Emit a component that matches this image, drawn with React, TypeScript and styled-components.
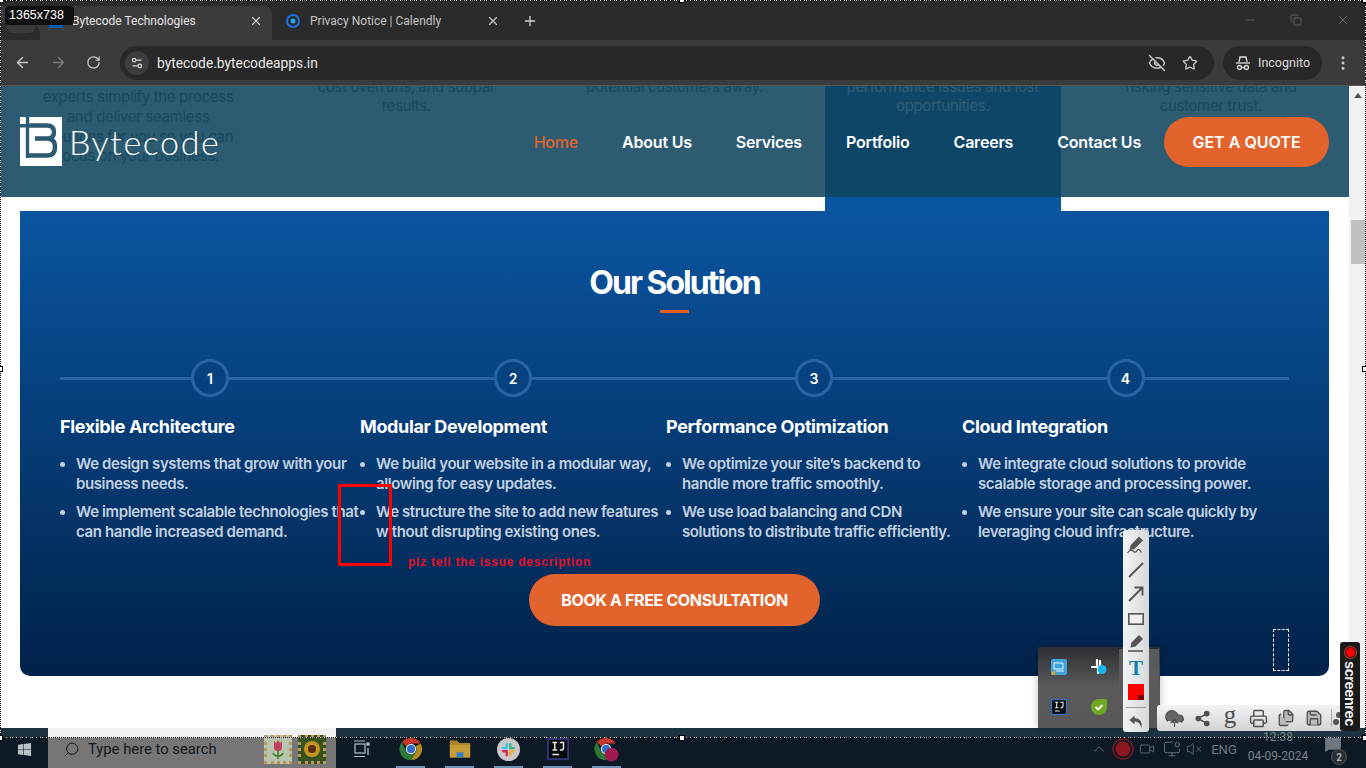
import React from 'react';
import styled, { createGlobalStyle } from 'styled-components';
import {
  ArrowLeft, ArrowRight, RotateCw, X, Plus, Minus, Copy, Star, EyeOff, MoreVertical, Settings2,
  ChevronUp, Video, MonitorDot, VolumeX, MessageSquare, Share2, Printer, Files, Save, Search, CloudUpload,
} from 'lucide-react';
import { FaWindows } from 'react-icons/fa';

const GlobalStyle = createGlobalStyle`
  html, body { margin: 0; padding: 0; background: #fff; overflow: hidden; }
  * { box-sizing: border-box; }
  body { font-family: Inter, "Liberation Sans", sans-serif; }
`

const Screen = styled.div`
  position: relative;
  width: 1366px;
  height: 768px;
  overflow: hidden;
  display: grid;
  grid-template-rows: 40px 46px 642px 40px;
  grid-template-columns: 1366px;
`

/* browser chrome */
const TabStrip = styled.div`
  background: #2b2b2b;
  display: flex;
  align-items: flex-end;
  padding-right: 15px;
  font-family: Roboto, sans-serif;
`
const TabSearch = styled.div`
  width: 40px;
  height: 34px;
  background: #3b3b3b;
  display: flex;
  align-items: flex-end;
`
const TabSearchInner = styled.div`
  width: 40px;
  height: 17px;
  background: #2b2b2b;
  border-radius: 0 10px 0 0;
  padding: 0 5px 7px 7px;
  display: flex;
  &::after {
    content: "";
    flex: 1;
    background: #3b3b3b;
    border-radius: 0 0 6px 6px;
  }
`
const Tab = styled.div<{ $active?: boolean }>`
  width: ${p => (p.$active ? '232px' : '240px')};
  height: 34px;
  padding: 0 ${p => (p.$active ? '9px' : '12px')} 5px ${p => (p.$active ? '9px' : '14px')};
  display: flex;
  align-items: center;
  gap: ${p => (p.$active ? '9px' : '10px')};
  font-size: 12px;
  color: ${p => (p.$active ? '#e6e6e6' : '#c4c4c4')};
  background: ${p => (p.$active ? '#3b3b3b' : 'transparent')};
  border-radius: 8px 8px 0 0;
  & span { flex: 1; white-space: nowrap; }
  & svg { flex: none; }
`
const NewTab = styled.div`
  width: 36px;
  height: 34px;
  padding-bottom: 4px;
  display: flex;
  align-items: center;
  justify-content: center;
  color: #d0d0d0;
`
const WindowControls = styled.div`
  margin-left: auto;
  height: 40px;
  display: flex;
  align-items: center;
  gap: 33px;
  color: #8c8c8c;
`
const Toolbar = styled.div`
  background: #3b3b3b;
  display: flex;
  align-items: center;
  padding: 0 0 0 14px;
  border-bottom: 1px solid #555;
  font-family: Roboto, sans-serif;
`
const NavButton = styled.div<{ $dim?: boolean }>`
  flex: none;
  width: 36px;
  height: 18px;
  display: flex;
  align-items: center;
  color: ${p => (p.$dim ? '#7c7c7c' : '#c8c8c8')};
`
const AddressBar = styled.div`
  flex: none;
  margin-left: -2px;
  width: 1094px;
  height: 34px;
  background: #282828;
  border-radius: 17px;
  display: flex;
  align-items: center;
  padding: 0 16px 0 5px;
  gap: 8px;
  font-size: 13.8px;
  color: #e8e8e8;
  & b { font-weight: 400; flex: 1; }
`
const SiteInfo = styled.div`
  width: 24px;
  height: 24px;
  border-radius: 50%;
  background: #3d3d3d;
  display: flex;
  align-items: center;
  justify-content: center;
  color: #d8d8d8;
`
const AddressIcons = styled.div`
  display: flex;
  align-items: center;
  gap: 16px;
  color: #c4c4c4;
`
const IncognitoChip = styled.div`
  flex: none;
  margin-left: 9px;
  width: 99px;
  height: 34px;
  border-radius: 17px;
  background: #282828;
  display: flex;
  align-items: center;
  gap: 7px;
  padding-left: 12px;
  font-size: 12.5px;
  color: #dedede;
`
const MenuDots = styled.div`
  margin-left: 12px;
  color: #c8c8c8;
  display: flex;
`

/* page */
const Page = styled.div`
  display: flex;
  min-height: 0;
  background: #fff;
`
const Viewport = styled.div`
  position: relative;
  flex: 1;
  min-width: 0;
  overflow: hidden;
`
const Scrollbar = styled.div`
  flex: none;
  width: 17px;
  background: #f1f1f1;
  padding-top: 7px;
  display: flex;
  flex-direction: column;
  align-items: center;
`
const ScrollArrow = styled.div`
  width: 0;
  height: 0;
  border-left: 4px solid transparent;
  border-right: 4px solid transparent;
  border-bottom: 5px solid #505050;
`
const ScrollThumb = styled.div`
  margin-top: 122px;
  width: 14px;
  height: 44px;
  background: #c1c1c1;
`
const IssueRow = styled.div`
  height: 125px;
  padding: 0 20px;
  display: grid;
  grid-template-columns: repeat(5, 1fr);
  gap: 32px;
`
const IssueCard = styled.div<{ $highlight?: boolean; $bottom: number }>`
  height: 125px;
  overflow: hidden;
  display: flex;
  flex-direction: column;
  justify-content: flex-end;
  padding-bottom: ${p => p.$bottom}px;
  text-align: center;
  font-size: 15px;
  line-height: 19.7px;
  letter-spacing: -0.33px;
  color: ${p => (p.$highlight ? '#fff' : '#666')};
  background: ${p => (p.$highlight ? '#0a55a0' : 'transparent')};
`
const Header = styled.header`
  position: absolute;
  top: 0;
  left: 0;
  right: 0;
  height: 111px;
  background: rgba(15, 68, 95, 0.88);
  padding: 31px 20px 0 20px;
  display: flex;
  align-items: flex-start;
`
const Logo = styled.div`
  display: flex;
  align-items: flex-start;
  gap: 7px;
  color: #fff;
`
const Wordmark = styled.div`
  font-family: Lato, sans-serif;
  font-weight: 300;
  font-size: 34px;
  line-height: 50px;
  letter-spacing: 1.6px;
`
const Nav = styled.nav`
  margin-left: auto;
  height: 50px;
  display: flex;
  align-items: center;
  gap: 44px;
`
const NavLink = styled.a<{ $active?: boolean }>`
  font-size: 16px;
  font-weight: ${p => (p.$active ? 500 : 600)};
  letter-spacing: -0.2px;
  color: ${p => (p.$active ? '#e2632b' : '#fff')};
`
const QuoteButton = styled.div`
  margin-left: -21px;
  width: 165px;
  height: 50px;
  border-radius: 25px;
  background: #e2632b;
  color: #fff;
  font-size: 16px;
  font-weight: 600;
  display: flex;
  align-items: center;
  justify-content: center;
`
const SolutionPanel = styled.section`
  margin: 0 20px;
  height: 465px;
  border-radius: 0 0 10px 10px;
  background: linear-gradient(180deg, #0a55a0 0%, #01224a 100%);
  padding: 51px 40px 0 40px;
  display: flex;
  flex-direction: column;
  align-items: center;
  color: #fff;
`
const Title = styled.h2`
  margin: 0;
  font-size: 32px;
  line-height: 42px;
  font-weight: 700;
  letter-spacing: -2px;
`
const TitleRule = styled.div`
  margin-top: 6px;
  width: 29px;
  height: 3px;
  background: #e8601f;
`
const Steps = styled.div`
  position: relative;
  margin-top: 46px;
  width: 100%;
  display: grid;
  grid-template-columns: 300px 306px 296px 327px;
  &::before {
    content: "";
    position: absolute;
    top: 18px;
    left: 0;
    right: 0;
    height: 3px;
    background: #2a62a6;
  }
`
const Step = styled.div`
  position: relative;
  display: flex;
  flex-direction: column;
`
const StepNumber = styled.div`
  align-self: center;
  width: 38px;
  height: 38px;
  border-radius: 50%;
  border: 3px solid #2a62a6;
  background: #074280;
  display: flex;
  align-items: center;
  justify-content: center;
  font-size: 14px;
  font-weight: 600;
`
const StepTitle = styled.h3`
  margin: 18px 0 0 0;
  font-size: 18px;
  line-height: 24px;
  font-weight: 700;
  letter-spacing: -0.37px;
  white-space: nowrap;
`
const Points = styled.ul`
  margin: 15px 0 0 0;
  padding: 0;
  list-style: none;
`
const Point = styled.li`
  position: relative;
  padding-left: 16px;
  margin-bottom: 8px;
  font-size: 15px;
  line-height: 20px;
  font-weight: 600;
  letter-spacing: -0.39px;
  color: #c3d0e0;
  &::before {
    content: "";
    position: absolute;
    left: 0;
    top: 8px;
    width: 5px;
    height: 5px;
    border-radius: 50%;
    background: #c3d0e0;
  }
`
const ConsultButton = styled.div`
  margin-top: 24px;
  width: 291px;
  height: 52px;
  border-radius: 26px;
  background: #e2632b;
  color: #fff;
  font-size: 16px;
  font-weight: 700;
  letter-spacing: -0.35px;
  display: flex;
  align-items: center;
  justify-content: center;
`

/* windows taskbar */
const Taskbar = styled.div`
  background: linear-gradient(180deg, #1c3340 9px, #0d1a26 10px), #0d1a26;
  display: flex;
  align-items: center;
  padding-top: 2px;
  font-family: Roboto, sans-serif;
`
const StartButton = styled.div`
  width: 48px;
  display: flex;
  justify-content: center;
  color: #b8c2c8;
`
const SearchBox = styled.div`
  width: 288px;
  height: 40px;
  margin-top: -2px;
  margin-right: 1px;
  padding: 2px 10px 0 15px;
  background: linear-gradient(180deg, #f0f0f0 9px, #767676 10px);
  display: flex;
  align-items: center;
  gap: 8px;
  color: #10181f;
  font-size: 14.8px;
  & span { flex: 1; }
`
const Stamp = styled.div<{ $bg: string }>`
  width: 28px;
  height: 29px;
  margin-left: -2px;
  background: ${p => p.$bg};
  border: 3px dotted #b89a5e;
  display: flex;
  align-items: center;
  justify-content: center;
`
const TaskSlot = styled.div<{ $running?: boolean }>`
  position: relative;
  width: 49px;
  height: 38px;
  display: flex;
  align-items: center;
  justify-content: center;
  &::after {
    content: "";
    display: ${p => (p.$running ? 'block' : 'none')};
    position: absolute;
    left: 10px;
    right: 10px;
    bottom: 0;
    height: 2px;
    background: #6f93b5;
  }
`
const Tray = styled.div`
  margin-left: auto;
  display: flex;
  align-items: center;
  color: #6f7680;
  font-size: 13px;
`
const TrayItem = styled.div<{ $w: number }>`
  width: ${p => p.$w}px;
  display: flex;
  justify-content: center;
`
const ClockBlock = styled.div`
  width: 66px;
  text-align: center;
  font-size: 12px;
  line-height: 19px;
  color: #7b828b;
  white-space: nowrap;
  padding-bottom: 2px;
  margin-top: -2px;
`
const NoticeWrap = styled.div`
  position: relative;
  width: 55px;
  height: 38px;
  padding: 5px 0 0 13px;
  color: #6f7680;
`
const NoticeBadge = styled.div`
  position: absolute;
  left: 20px;
  top: 19px;
  width: 16px;
  height: 16px;
  border-radius: 50%;
  background: #2a2f33;
  border: 1px solid #555;
  color: #aaa;
  font-size: 10px;
  font-weight: 700;
  display: flex;
  align-items: center;
  justify-content: center;
`

/* screen capture tool laid over everything */
const SelectionFrame = styled.div`
  position: absolute;
  top: 0;
  left: 0;
  width: 1366px;
  height: 738px;
  border: 1px dashed #fff;
  outline: 1px dotted #000;
  outline-offset: -1px;
  pointer-events: none;
`
const Handle = styled.div<{ $x: number; $y: number }>`
  position: absolute;
  left: ${p => p.$x}px;
  top: ${p => p.$y}px;
  width: 6px;
  height: 6px;
  background: #fff;
  border: 1px solid #000;
`
const SizeBadge = styled.div`
  position: absolute;
  left: 5px;
  top: 6px;
  width: 69px;
  height: 19px;
  border-radius: 4px;
  background: #101010;
  color: #fff;
  font-family: "Liberation Sans", sans-serif;
  font-size: 12.5px;
  line-height: 19px;
  padding-left: 4px;
`
const MarkerBox = styled.div`
  position: absolute;
  left: 338px;
  top: 484px;
  width: 54px;
  height: 82px;
  border: 3px solid #f00;
`
const MarkerNote = styled.div`
  position: absolute;
  left: 408px;
  top: 554px;
  color: #e8102a;
  font-family: "Liberation Sans", sans-serif;
  font-weight: 700;
  font-size: 12px;
  line-height: 16px;
  letter-spacing: 0.75px;
  white-space: nowrap;
`
const BlankBox = styled.div`
  position: absolute;
  left: 1273px;
  top: 629px;
  width: 16px;
  height: 42px;
  border: 1px dashed #fff;
`
const TrayPopup = styled.div`
  position: absolute;
  left: 1038px;
  top: 647px;
  width: 122px;
  height: 81px;
  background:
    linear-gradient(#555a5c, #5c5c5c) right 1px top 2px / 40px 38px no-repeat,
    linear-gradient(180deg, #2c2f33 0%, #5a5a5a 50%, #585858 100%);
  box-shadow: 0 0 8px rgba(0, 0, 0, 0.25);
  display: grid;
  grid-template-columns: 40px 40px;
  grid-template-rows: 40px 40px;
  align-items: center;
  justify-items: center;
  padding-left: 1px;
`
const ToolColumn = styled.div`
  position: absolute;
  left: 1123px;
  top: 530px;
  width: 26px;
  height: 202px;
  border-radius: 3px;
  background: linear-gradient(90deg, #f2f3f4, #d6d8da);
  display: flex;
  flex-direction: column;
  align-items: center;
  padding-top: 5px;
  gap: 4.5px;
  color: #505050;
`
const ToolSlot = styled.div`
  height: 20px;
  display: flex;
  align-items: center;
  justify-content: center;
`
const ToolDivider = styled.div`
  width: 20px;
  height: 1px;
  background: #999;
`
const TextTool = styled.div`
  font-family: "Liberation Serif", serif;
  font-size: 21px;
  font-weight: 700;
  line-height: 20px;
  color: #0f7fb0;
`
const ColorSwatch = styled.div`
  position: relative;
  width: 16px;
  height: 16px;
  background: #f00;
  &::after {
    content: "";
    position: absolute;
    right: 0;
    bottom: 0;
    width: 6px;
    height: 5px;
    background: #7c0000;
  }
`
const ActionRow = styled.div`
  position: absolute;
  left: 1157px;
  top: 705px;
  width: 190px;
  height: 26px;
  border-radius: 3px;
  background: linear-gradient(180deg, #f2f3f4, #d2d4d6);
  display: flex;
  align-items: center;
  padding-left: 3px;
  color: #505050;
`
const ActionSlot = styled.div`
  width: 28px;
  display: flex;
  justify-content: center;
  & svg { flex: none; }
`
const ActionDivider = styled.div`
  width: 1px;
  height: 18px;
  margin-left: 3px;
  background: #aaa;
`
const GoogleG = styled.div`
  font-family: "Liberation Serif", serif;
  font-size: 25px;
  line-height: 20px;
  padding-bottom: 6px;
  color: #505050;
`
const RecBadge = styled.div`
  position: absolute;
  left: 1340px;
  top: 642px;
  width: 20px;
  height: 89px;
  border-radius: 3px;
  background: #1a1a1a;
  color: #f0f0f0;
  display: flex;
  flex-direction: column;
  align-items: center;
  padding-top: 3px;
  gap: 3px;
  font-family: "Liberation Sans", sans-serif;
  font-size: 14.5px;
  font-weight: 700;
  & span { writing-mode: vertical-rl; line-height: 20px; letter-spacing: -0.4px; }
`
const RecDot = styled.div`
  width: 9px;
  height: 9px;
  flex: none;
  border-radius: 50%;
  background: #f00;
  box-shadow: 0 0 0 1px #1a1a1a, 0 0 0 2px #d33;
  margin: 3px 0 1px;
`

/* little drawings */
const LogoMark = () => (
  <svg width="42" height="49" viewBox="0 0 42 49">
    <rect width="42" height="49" fill="#fff" />
    <g fill="none" stroke="#2c5a72" strokeWidth="4.4">
      <path d="M0 8.8h7.5M7.5 0v41" strokeWidth="3.4" />
      <path d="M7.5 8.5H27q7 0 7 6.5t-7 6.5H15M27 21.5q8 0 8 8.5t-8 8.5H7.5" />
    </g>
  </svg>
)
const SiteFavicon = () => (
  <svg width="14" height="14" viewBox="0 0 14 14">
    <rect width="14" height="14" fill="#fff" />
    <rect y="11" width="14" height="3" fill="#0b5bb0" />
  </svg>
)
const CalendlyIcon = () => (
  <svg width="14" height="14" viewBox="0 0 14 14">
    <circle cx="7" cy="7" r="6" fill="none" stroke="#1a73e8" strokeWidth="2" />
    <circle cx="7" cy="7" r="2.5" fill="#2aa8e8" />
  </svg>
)
const IncognitoIcon = () => (
  <svg width="16" height="16" viewBox="0 0 16 16" fill="none" stroke="currentColor" strokeWidth="1.3">
    <path d="M4 7l1-5h6l1 5" />
    <path d="M1 8h14" />
    <circle cx="4.5" cy="12.5" r="2" />
    <circle cx="11.5" cy="12.5" r="2" />
    <path d="M6.5 12.5h3" />
  </svg>
)
const ChromeIcon = () => (
  <svg width="24" height="24" viewBox="0 0 26 26">
    <path d="M13 1a12 12 0 0 1 10.4 6H13a6 6 0 0 0-5.2 3L3.2 5.5A12 12 0 0 1 13 1z" fill="#c9352b" />
    <path d="M23.4 7A12 12 0 0 1 13 25l5.2-9a6 6 0 0 0 0-6z" fill="#b58a1c" />
    <path d="M3.2 5.5A12 12 0 0 0 13 25l5.2-9a6 6 0 0 1-10.4 0z" fill="#2b7a38" />
    <circle cx="13" cy="13" r="5" fill="#2f6fc8" stroke="#d8d8d8" strokeWidth="1.4" />
  </svg>
)
const FolderIcon = () => (
  <svg width="22" height="22" viewBox="0 0 26 24">
    <path d="M1 2h9l2 3h13v17H1z" fill="#a9842a" />
    <path d="M1 7h24v15H1z" fill="#c59c38" />
    <path d="M9 22v-6h8v6z" fill="#2d7fc1" />
  </svg>
)
const SlackIcon = () => (
  <svg width="23" height="23" viewBox="0 0 26 26">
    <circle cx="13" cy="13" r="13" fill="#c8c8c8" />
    <path d="M11 7v4.5H7" stroke="#36c5f0" strokeWidth="2.6" fill="none" strokeLinecap="round" strokeLinejoin="round" />
    <path d="M15 7v4.5H19" stroke="#2eb67d" strokeWidth="2.6" fill="none" strokeLinecap="round" strokeLinejoin="round" />
    <path d="M19 15h-4v4.5" stroke="#ecb22e" strokeWidth="2.6" fill="none" strokeLinecap="round" strokeLinejoin="round" />
    <path d="M7 15h4v4.5" stroke="#e01e5a" strokeWidth="2.6" fill="none" strokeLinecap="round" strokeLinejoin="round" />
  </svg>
)
const IdeaIcon = ({ size, border }: { size: number; border: string }) => (
  <svg width={size} height={size} viewBox="0 0 24 24">
    <rect x="1" y="1" width="22" height="22" fill="#08090c" stroke={border} strokeWidth="1.6" />
    <path d="M6 5h5M8.5 5v8M6 13h5M14 5h4v6q0 2-2 2h-2M6 18h7" stroke="#f0f0f0" strokeWidth="1.6" fill="none" />
  </svg>
)
const TaskViewIcon = () => (
  <svg width="16" height="18" viewBox="0 0 16 18" fill="none" stroke="#b8c0c6" strokeWidth="1.2">
    <rect x="1" y="4" width="10" height="9" />
    <path d="M0 1h11M0 16.5h11" />
    <rect x="13" y="3" width="2" height="2" fill="#b8c0c6" />
    <path d="M14 8v7" />
  </svg>
)
const ChromeProfile = () => (
  <svg width="25" height="25" viewBox="0 0 27 27">
    <path d="M13 1a12 12 0 0 1 10.4 6H13a6 6 0 0 0-5.2 3L3.2 5.5A12 12 0 0 1 13 1z" fill="#c9352b" />
    <path d="M3.2 5.5A12 12 0 0 0 13 25l5.2-9a6 6 0 0 1-10.4 0z" fill="#2b7a38" />
    <circle cx="13" cy="13" r="5" fill="#2f6fc8" stroke="#d8d8d8" strokeWidth="1.4" />
    <circle cx="19" cy="19" r="7.5" fill="#a01850" />
  </svg>
)
const TulipStamp = () => (
  <svg width="14" height="20" viewBox="0 0 14 20">
    <path d="M3 2l2 2 2-3 2 3 2-2v7q0 3-4 3t-4-3z" fill="#c04060" />
    <path d="M7 12v8M7 17q-4 0-5-3M7 17q4 0 5-3" stroke="#3c7a2e" strokeWidth="1.5" fill="none" />
  </svg>
)
const SunflowerStamp = () => (
  <svg width="18" height="18" viewBox="0 0 18 18">
    <circle cx="9" cy="9" r="8" fill="#c09520" />
    <circle cx="9" cy="9" r="4" fill="#5b2c0e" />
  </svg>
)
const LeafCheck = () => (
  <svg width="16" height="16" viewBox="0 0 16 16">
    <path d="M8 0h8v8a8 8 0 0 1-16 0 8 8 0 0 1 8-8z" fill="#6fa81e" />
    <path d="M4.5 8l2.5 2.5 4.5-4.5" stroke="#fff" strokeWidth="1.8" fill="none" />
  </svg>
)
const ControlPanelIcon = () => (
  <svg width="16" height="16" viewBox="0 0 16 16">
    <rect width="16" height="16" rx="2" fill="#3fa3dc" />
    <path d="M3 4h9v6H3zM5 12h8" stroke="#e4f3fb" fill="none" />
    <path d="M0 14l4-3v5H1z" fill="#d9a43a" />
  </svg>
)
const SlackTray = () => (
  <svg width="16" height="16" viewBox="0 0 16 16">
    <path d="M6 1v6M1 8h6M9 2v5M7 14V9" stroke="#fff" strokeWidth="2.2" strokeLinecap="round" />
    <circle cx="11" cy="10.5" r="4.5" fill="#18b5ee" />
  </svg>
)
const PenTool = () => (
  <svg width="20" height="20" viewBox="0 0 20 20">
    <path d="M13 1.5l4 4-8.5 8.5-5 1.2 1.2-5z" fill="#555" />
    <path d="M1.5 18q3-4.5 5.5-2t4-.5 4.5 2" stroke="#555" strokeWidth="1.2" fill="none" />
  </svg>
)
const LineTool = () => (
  <svg width="18" height="18" viewBox="0 0 18 18">
    <path d="M2 16L16 2" stroke="#555" strokeWidth="1.8" />
  </svg>
)
const ArrowTool = () => (
  <svg width="18" height="18" viewBox="0 0 18 18" fill="none" stroke="#555" strokeWidth="1.9">
    <path d="M2 16L15 3M7.5 2.5h8v8" />
  </svg>
)
const RectTool = () => (
  <svg width="16" height="12" viewBox="0 0 16 12">
    <rect x="0.8" y="0.8" width="14.4" height="10.4" fill="#eee" stroke="#555" strokeWidth="1.6" />
  </svg>
)
const MarkTool = () => (
  <svg width="18" height="18" viewBox="0 0 18 18">
    <path d="M12 1l4 4-7.5 7.5-5 1 1-5z" fill="#555" />
    <path d="M1 17h15" stroke="#444" strokeWidth="1.4" />
  </svg>
)
const UndoTool = () => (
  <svg width="16" height="16" viewBox="0 0 16 16">
    <path d="M6.5 1.5L1.5 6l5 4.5V7.6q5-.2 7 6.4 1.5-9.5-7-10z" fill="#555" />
  </svg>
)
const RecordIcon = () => (
  <svg width="22" height="22" viewBox="0 0 22 22">
    <circle cx="11" cy="11" r="10" fill="none" stroke="#7a1820" strokeWidth="1.5" />
    <circle cx="11" cy="11" r="7.5" fill="#8f1620" />
  </svg>
)
const GearStub = () => (
  <svg width="14" height="16" viewBox="0 0 14 16">
    <circle cx="7" cy="5" r="3" fill="#555" />
    <circle cx="4" cy="12" r="3" fill="#555" />
  </svg>
)

const ISSUES = [
  { lines: ['experts simplify the process', 'and deliver seamless', 'solutions for you so you can', 'focus on your business.'], bottom: 45 },
  { lines: ['cost overruns, and subpar', 'results.'], bottom: 95 },
  { lines: ['potential customers away.'], bottom: 114 },
  { lines: ['performance issues and lost', 'opportunities.'], bottom: 95, highlight: true },
  { lines: ['risking sensitive data and', 'customer trust.'], bottom: 95 },
]

const NAV = ['About Us', 'Services', 'Portfolio', 'Careers', 'Contact Us']

const STEPS = [
  {
    title: 'Flexible Architecture',
    points: ['We design systems that grow with your business needs.', 'We implement scalable technologies that can handle increased demand.'],
  },
  {
    title: 'Modular Development',
    points: ['We build your website in a modular way, allowing for easy updates.', 'We structure the site to add new features without disrupting existing ones.'],
  },
  {
    title: 'Performance Optimization',
    points: ['We optimize your site\u2019s backend to handle more traffic smoothly.', 'We use load balancing and CDN solutions to distribute traffic efficiently.'],
  },
  {
    title: 'Cloud Integration',
    points: ['We integrate cloud solutions to provide scalable storage and processing power.', 'We ensure your site can scale quickly by leveraging cloud infrastructure.'],
  },
]

const HANDLES = [[-2, -3], [679, -3], [1362, 366], [-3, 366], [679, 735], [-3, 735], [1362, 735], [1362, -3]]

export default function App() {
  return (
    <>
      <GlobalStyle />
      <Screen>
        <TabStrip>
          <TabSearch><TabSearchInner /></TabSearch>
          <Tab $active>
            <SiteFavicon />
            <span>Bytecode Technologies</span>
            <X size={14} color="#d8d8d8" />
          </Tab>
          <Tab>
            <CalendlyIcon />
            <span>Privacy Notice | Calendly</span>
            <X size={14} color="#c8c8c8" />
          </Tab>
          <NewTab><Plus size={16} /></NewTab>
          <WindowControls>
            <Minus size={14} strokeWidth={1} />
            <Copy size={12} strokeWidth={1} />
            <X size={16} strokeWidth={1} />
          </WindowControls>
        </TabStrip>
        <Toolbar>
          <NavButton><ArrowLeft size={17} /></NavButton>
          <NavButton $dim><ArrowRight size={17} /></NavButton>
          <NavButton><RotateCw size={15} /></NavButton>
          <AddressBar>
            <SiteInfo><Settings2 size={14} /></SiteInfo>
            <b>bytecode.bytecodeapps.in</b>
            <AddressIcons>
              <EyeOff size={18} />
              <Star size={16} />
            </AddressIcons>
          </AddressBar>
          <IncognitoChip><IncognitoIcon />Incognito</IncognitoChip>
          <MenuDots><MoreVertical size={18} /></MenuDots>
        </Toolbar>

        <Page>
          <Viewport>
            <IssueRow>
              {ISSUES.map(issue => (
                <IssueCard key={issue.lines[0]} $bottom={issue.bottom} $highlight={issue.highlight}>
                  {issue.lines.map(line => <div key={line}>{line}</div>)}
                </IssueCard>
              ))}
            </IssueRow>
            <Header>
              <Logo>
                <LogoMark />
                <Wordmark>Bytecode</Wordmark>
              </Logo>
              <Nav>
                <NavLink $active>Home</NavLink>
                {NAV.map(item => <NavLink key={item}>{item}</NavLink>)}
                <QuoteButton>GET A QUOTE</QuoteButton>
              </Nav>
            </Header>
            <SolutionPanel>
              <Title>Our Solution</Title>
              <TitleRule />
              <Steps>
                {STEPS.map((step, i) => (
                  <Step key={step.title}>
                    <StepNumber>{i + 1}</StepNumber>
                    <StepTitle>{step.title}</StepTitle>
                    <Points>
                      {step.points.map(point => <Point key={point}>{point}</Point>)}
                    </Points>
                  </Step>
                ))}
              </Steps>
              <ConsultButton>BOOK A FREE CONSULTATION</ConsultButton>
            </SolutionPanel>
          </Viewport>
          <Scrollbar>
            <ScrollArrow />
            <ScrollThumb />
          </Scrollbar>
        </Page>

        <Taskbar>
          <StartButton><FaWindows size={15} /></StartButton>
          <SearchBox>
            <Search size={17} strokeWidth={1.4} style={{ transform: 'scaleX(-1)' }} />
            <span>Type here to search</span>
            <Stamp $bg="#b8c4ac"><TulipStamp /></Stamp>
            <Stamp $bg="#37541f"><SunflowerStamp /></Stamp>
          </SearchBox>
          <TaskSlot><TaskViewIcon /></TaskSlot>
          <TaskSlot $running><ChromeIcon /></TaskSlot>
          <TaskSlot $running><FolderIcon /></TaskSlot>
          <TaskSlot $running><SlackIcon /></TaskSlot>
          <TaskSlot $running><IdeaIcon size={22} border="#3a3f8f" /></TaskSlot>
          <TaskSlot $running><ChromeProfile /></TaskSlot>
          <Tray>
            <TrayItem $w={24}><ChevronUp size={18} strokeWidth={1.2} /></TrayItem>
            <TrayItem $w={23}><RecordIcon /></TrayItem>
            <TrayItem $w={26}><Video size={16} strokeWidth={1.2} /></TrayItem>
            <TrayItem $w={24}><MonitorDot size={18} strokeWidth={1.2} /></TrayItem>
            <TrayItem $w={19}><VolumeX size={16} strokeWidth={1.2} /></TrayItem>
            <TrayItem $w={42}>ENG</TrayItem>
            <ClockBlock>12:38<br />04-09-2024</ClockBlock>
            <NoticeWrap>
              <MessageSquare size={18} fill="#6f7680" strokeWidth={1} />
              <NoticeBadge>2</NoticeBadge>
            </NoticeWrap>
          </Tray>
        </Taskbar>

        <SelectionFrame />
        {HANDLES.map(([x, y]) => <Handle key={`${x}-${y}`} $x={x} $y={y} />)}
        <SizeBadge>1365x738</SizeBadge>
        <MarkerBox />
        <MarkerNote>plz tell the issue description</MarkerNote>
        <BlankBox />
        <TrayPopup>
          <ControlPanelIcon />
          <SlackTray />
          <IdeaIcon size={16} border="#2a7de0" />
          <LeafCheck />
        </TrayPopup>
        <ToolColumn>
          <ToolSlot><PenTool /></ToolSlot>
          <ToolSlot><LineTool /></ToolSlot>
          <ToolSlot><ArrowTool /></ToolSlot>
          <ToolSlot><RectTool /></ToolSlot>
          <ToolSlot><MarkTool /></ToolSlot>
          <ToolSlot><TextTool>T</TextTool></ToolSlot>
          <ToolSlot><ColorSwatch /></ToolSlot>
          <ToolDivider />
          <ToolSlot><UndoTool /></ToolSlot>
        </ToolColumn>
        <ActionRow>
          <ActionSlot><CloudUpload size={21} fill="#666" strokeWidth={1.4} /></ActionSlot>
          <ActionSlot><Share2 size={17} fill="#505050" /></ActionSlot>
          <ActionSlot><GoogleG>g</GoogleG></ActionSlot>
          <ActionSlot><Printer size={19} strokeWidth={1.8} /></ActionSlot>
          <ActionSlot><Files size={18} fill="#bbb" strokeWidth={1.8} /></ActionSlot>
          <ActionSlot><Save size={18} fill="#bbb" strokeWidth={1.8} /></ActionSlot>
          <ActionDivider />
          <GearStub />
        </ActionRow>
        <RecBadge>
          <RecDot />
          <span>screenrec</span>
        </RecBadge>
      </Screen>
    </>
  )
}
